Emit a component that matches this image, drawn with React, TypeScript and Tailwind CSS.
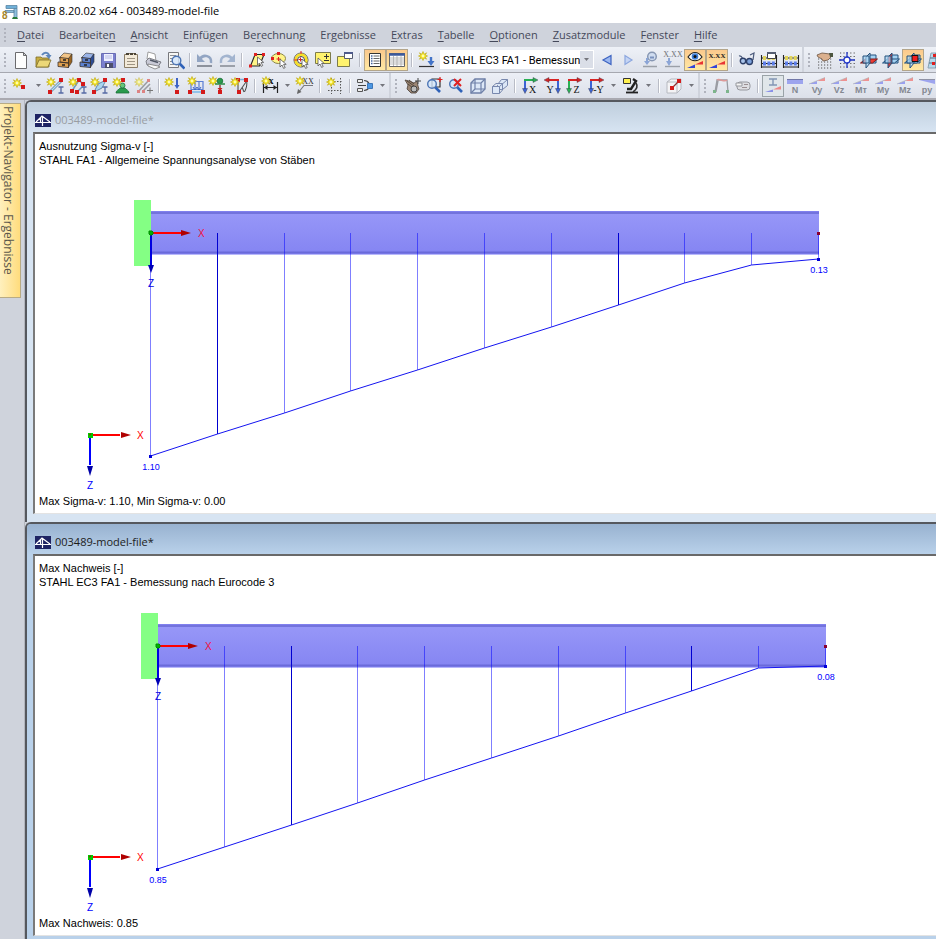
import type { ReactNode } from 'react';

type Menu = { before: string; hotkey: string; after: string };

type Station = { y: number; solid?: boolean };

type ModelView = {
    id: string;
    active: boolean;
    title: string;
    heading: string[];
    footer: string;
    originX: number;
    axisY: number;
    stations: Station[];
    startValue: string;
    endValue: string;
}

const menus: Menu[] = [
    { before: '', hotkey: 'D', after: 'atei' },
    { before: 'Bearbeite', hotkey: 'n', after: '' },
    { before: '', hotkey: 'A', after: 'nsicht' },
    { before: 'E', hotkey: 'i', after: 'nfügen' },
    { before: 'Be', hotkey: 'r', after: 'echnung' },
    { before: 'Er', hotkey: 'g', after: 'ebnisse' },
    { before: '', hotkey: 'E', after: 'xtras' },
    { before: '', hotkey: 'T', after: 'abelle' },
    { before: '', hotkey: 'O', after: 'ptionen' },
    { before: '', hotkey: 'Z', after: 'usatzmodule' },
    { before: '', hotkey: 'F', after: 'enster' },
    { before: '', hotkey: 'H', after: 'ilfe' },
];

const views: ModelView[] = [
    {
        id: 'sigma',
        active: false,
        title: '003489-model-file*',
        heading: ['Ausnutzung Sigma-v [-]', 'STAHL FA1 - Allgemeine Spannungsanalyse von Stäben'],
        footer: 'Max Sigma-v: 1.10, Min Sigma-v: 0.00',
        originX: 116,
        axisY: 66,
        stations: [
            { y: 289 }, { y: 267, solid: true }, { y: 246 }, { y: 224 }, { y: 203 }, { y: 181 },
            { y: 160 }, { y: 138, solid: true }, { y: 116 }, { y: 98 }, { y: 92 },
        ],
        startValue: '1.10',
        endValue: '0.13',
    },
    {
        id: 'eurocode',
        active: true,
        title: '003489-model-file*',
        heading: ['Max Nachweis [-]', 'STAHL EC3 FA1 - Bemessung nach Eurocode 3'],
        footer: 'Max Nachweis: 0.85',
        originX: 123,
        axisY: 57,
        stations: [
            { y: 280 }, { y: 258 }, { y: 236, solid: true }, { y: 214 }, { y: 191 }, { y: 169 },
            { y: 147 }, { y: 124 }, { y: 102, solid: true }, { y: 79 }, { y: 77 },
        ],
        startValue: '0.85',
        endValue: '0.08',
    },
];

const MEMBER_LENGTH = 668;

/* ---------- small drawing helpers shared by the toolbar icons ---------- */

function Icon({ children }: { children: ReactNode }) {
    return (
        <svg width="20" height="20" viewBox="0 0 20 20" fill="none" aria-hidden="true">
            {children}
        </svg>
    )
}

function Star({ x, y }: { x: number; y: number }) {
    return (
        <g transform={`translate(${x} ${y})`}>
            <path d="M0-4.5L1.2-1.8 3.6-3.2 2.2-1 4.500 0 2.2 1 3.6 3.2 1.200 2 0 4.500-1.200 2-3.600 3.200-2.200 1-4.500 0-2.200-1-3.600-3.200-1.200-1.800z" fill="#f6e71c" stroke="#c2ae22" strokeWidth=".7" />
            <circle r="1.4" fill="#fffcae" />
        </g>
    )
}

function Dot({ x, y }: { x: number; y: number }) {
    return <rect x={x - 2} y={y - 2} width="4" height="4" fill="#d41a1a" />
}

function Profile({ x, y }: { x: number; y: number }) {
    return <path d={`M${x - 2.5} ${y - 3}h5M${x} ${y - 3}v6M${x - 2.5} ${y + 3}h5`} stroke="#566aa4" strokeWidth="1.3" />
}

function Cursor({ x, y }: { x: number; y: number }) {
    return <path d={`M${x} ${y}v8l2-2 1.6 3.4 1.6-.8-1.6-3.2h2.6z`} fill="#fff" stroke="#555" strokeWidth=".8" />
}

function Cabinet({ front, side, top }: { front: string; side: string; top: string }) {
    return (
        <Icon>
            <path d="M4 8L9 3l8 1-3 5z" fill={top} stroke="#333" strokeWidth=".6" />
            <path d="M13 9l4-5v8l-4 6z" fill={side} stroke="#333" strokeWidth=".6" />
            <path d="M5 7.500l8.500 1V13L5 12zM3 12l10.500 1v4.500L3 16.500z" fill={front} stroke="#3a3028" strokeWidth=".8" />
            <path d="M8 10h3M7 15h3" stroke="#222" strokeWidth="1.400" />
        </Icon>
    )
}

function Lens({ x, y }: { x: number; y: number }) {
    return (
        <>
            <path d={`M${x + 3} ${y + 3}l5 5`} stroke="#2f62b8" strokeWidth="2.6" />
            <circle cx={x} cy={y} r="4.3" fill="#d3e6fb" fillOpacity=".8" stroke="#4b74b4" strokeWidth="1.4" />
        </>
    )
}

function Slope() {
    return (
        <>
            <path d="M2 18L10 14.500V18z" fill="#3345d8" />
            <path d="M10 14.500L18 11v3.500z" fill="#e83434" />
        </>
    )
}

function Abacus() {
    return (
        <>
            <path d="M2.500 5v13M17.500 5v13M2 8h16M2 13.500h16M2 17h16" stroke="#222" strokeWidth="1.100" />
            <path d="M4 8h12" stroke="#e0d35a" strokeWidth="4" strokeDasharray="3 1.400" />
            <path d="M4 13.500h12" stroke="#5b7ce8" strokeWidth="4" strokeDasharray="3 1.400" />
        </>
    )
}

function Planes({ active = 0 }: { active?: number }) {
    const blue = '#a4d2f2';
    return (
        <Icon>
            <path d="M10 5h7v8h-7z" fill={blue} stroke="#23507c" />
            <path d="M1.500 13l5-4h12l-5 4z" fill={active === 0 ? '#ee3a32' : blue} stroke={active === 0 ? '#7c1c1c' : '#23507c'} />
            <path d="M7 7l4-4v10l-4 5z" fill={active === 1 ? '#ee3a32' : '#c4e2f7'} stroke="#23507c" />
            <path d="M4 6h6v7H4z" fill={blue} fillOpacity=".7" stroke="#23507c" />
            {active === 2 && <path d="M9 5.500h6v6H9z" fill="#f02020" stroke="#111" />}
        </Icon>
    )
}

function AxisView({ label, across, down, flip }: { label: string; across: string; down: string; flip?: boolean }) {
    const stem = flip ? 16 : 5;
    return (
        <Icon>
            <path d={`M${stem} 5v8`} stroke={down} strokeWidth="2" />
            <path d={`M${stem - 2.5} 12.500h5l-2.500 5z`} fill={down} stroke="#334" strokeWidth=".4" />
            <path d={flip ? 'M6 4h11' : 'M4 4h10'} stroke={across} strokeWidth="2" />
            <path d={flip ? 'M7 1.500L2 4l5 2.500z' : 'M13 1.500L18 4l-5 2.500z'} fill={across} stroke="#334" strokeWidth=".4" />
            <text x={flip ? 8 : 12.5} y="17" textAnchor="middle" fontSize="10" className="font-['Liberation_Serif',serif]" fill="#111">{label}</text>
        </Icon>
    )
}

function ResultIcon({ label, flat }: { label: string; flat?: boolean }) {
    return (
        <Icon>
            {flat ? (
                <>
                    <path d="M2 3h16v5H2z" fill="#9da4ee" />
                    <path d="M2 3.500h16" stroke="#7177a8" />
                </>
            ) : (
                <>
                    <path d="M2 8l8-3v3z" fill="#989ff0" />
                    <path d="M10 5l8-3.500V5z" fill="#ee9292" />
                    <path d="M2 8L18 1.500" stroke="#aaa" strokeWidth=".6" />
                </>
            )}
            <text x="10" y="17" textAnchor="middle" fontSize="9" fontWeight="bold" className="font-['Liberation_Sans',sans-serif]" fill="#858992">{label}</text>
        </Icon>
    )
}

/* ---------- toolbar building blocks ---------- */

function Tool({ name, pressed, children }: { name: string; pressed?: 'hot' | 'soft'; children: ReactNode }) {
    const look = pressed === 'hot'
        ? 'border border-[#b3a58a] bg-linear-to-b from-[#fbc98c] to-[#ffe9a4]'
        : pressed === 'soft'
            ? 'border border-[#9aa3a8] bg-[#e0e6ea]'
            : '';
    return (
        <button type="button" aria-label={name} aria-pressed={pressed ? true : undefined} className={`flex h-[22px] w-[22px] shrink-0 items-center justify-center ${look}`}>
            {children}
        </button>
    )
}

function Separator() {
    return (
        <div className="flex w-2 shrink-0 justify-center">
            <div className="h-[14px] w-px bg-[#b9bcc6]" />
            <div className="h-[14px] w-px bg-white" />
        </div>
    )
}

function Grip() {
    return (
        <div className="flex w-[10px] shrink-0 flex-col items-center gap-[2px]">
            {[0, 1, 2, 3].map((i) => <div key={i} className="h-[2px] w-[2px] bg-[#b0b3bd]" />)}
        </div>
    )
}

function BarBreak() {
    return (
        <div className="flex w-3 shrink-0 items-center self-stretch">
            <div className="w-[2px] self-stretch bg-[#cfd3dc]" />
            <Grip />
        </div>
    )
}

function Caret({ name }: { name: string }) {
    return (
        <button type="button" aria-label={name} className="flex w-[13px] shrink-0 items-center justify-center">
            <svg width="5" height="3" viewBox="0 0 5 3" aria-hidden="true"><path d="M0 0h5L2.5 3z" fill="#74757c" /></svg>
        </button>
    )
}

function MainToolbar() {
    return (
        <div role="toolbar" aria-label="Standard" className="flex h-[26px] items-center border-b border-[#a6a8b0] bg-linear-to-b from-[#eef1f7] to-[#dde1ea]">
            <Grip />
            <Tool name="Neu"><Icon>
                <path d="M4.5 2.5h8l3 3v13h-11z" fill="#fdfdfd" stroke="#6b6b6e" />
                <path d="M12.5 2.5v3h3z" fill="#d4d4d8" stroke="#6b6b6e" />
            </Icon></Tool>
            <Tool name="Öffnen"><Icon>
                <path d="M3 7h5l1 1h7v9H3z" fill="#c7ad42" stroke="#7d6d2a" strokeWidth=".8" />
                <path d="M3 17L6 10h12l-3 7z" fill="#ecd878" stroke="#7d6d2a" strokeWidth=".8" />
                <path d="M9 5c3-4 7-2 7 1" stroke="#5d86bb" strokeWidth="2" />
                <path d="M12.5 5h6L16 9z" fill="#5d86bb" />
            </Icon></Tool>
            <Tool name="Projekt-Manager"><Cabinet front="#e0a04e" side="#9a6420" top="#f1c487" /></Tool>
            <Tool name="Block-Manager"><Cabinet front="#5c81cf" side="#2d4c94" top="#9ab4e8" /></Tool>
            <Tool name="Speichern"><Icon>
                <path d="M2.5 3.5h14v14h-14z" fill="#7b80cf" stroke="#6a6db4" />
                <path d="M5 4h9v7H5z" fill="#eef0ff" />
                <path d="M6 6h7M6 8h7" stroke="#b8bce4" />
                <path d="M6 13h8v5H6z" fill="#4d4f6c" />
                <path d="M8 14h2v3H8z" fill="#fff" />
            </Icon></Tool>
            <Tool name="Eigenschaften"><Icon>
                <path d="M3.5 4.5h3v-1h7v1h3v13h-13z" fill="#f3ead9" stroke="#8b7d66" />
                <path d="M5 4h3M9 4h3M13 4h2" stroke="#4a4335" strokeWidth="2" />
                <path d="M6 8.5h8M6 11.5h8M6 14.500h8" stroke="#9e9483" />
            </Icon></Tool>
            <Tool name="Drucken"><Icon>
                <path d="M4 9l1-7 7 2 1 7z" fill="#fff" stroke="#888" strokeWidth=".8" />
                <path d="M3 11l3-3 12 4-3 5-11-2z" fill="#c9cad6" stroke="#66676f" strokeWidth=".8" />
                <path d="M5 14l10 2 2 1-5 2-7-3z" fill="#fafafa" stroke="#777" strokeWidth=".8" />
                <path d="M7 10l8 2.500" stroke="#4f5664" strokeWidth="1.500" />
            </Icon></Tool>
            <Tool name="Druckvorschau"><Icon>
                <path d="M3.5 2.5h10v15h-10z" fill="#f6f6f4" stroke="#77787d" />
                <path d="M5 5.500h6M5 8.500h3M5 11.500h2M5 14.500h4" stroke="#8d8f94" />
                <Lens x={11.5} y={10.5} />
            </Icon></Tool>
            <Separator />
            <Tool name="Rückgängig"><Icon>
                <path d="M5 9c3-5 12-4 11 4" stroke="#92a5c3" strokeWidth="2.500" />
                <path d="M2 4v8h8z" fill="#92a5c3" />
                <path d="M2 16h15" stroke="#8d929c" strokeWidth="2" />
            </Icon></Tool>
            <Tool name="Wiederholen"><Icon>
                <path d="M15 9c-3-5-12-4-11 4" stroke="#a2b4cf" strokeWidth="2.500" />
                <path d="M18 4v8h-8z" fill="#a2b4cf" />
                <path d="M3 16h15" stroke="#9ba0a9" strokeWidth="2" />
            </Icon></Tool>
            <Separator />
            <Tool name="Rhomboid-Auswahl"><Icon>
                <path d="M3.500 16L8 4.500h9L12.500 16z" fill="#fff487" stroke="#222" strokeWidth="1.100" />
                <Cursor x={10.5} y={7} />
                <path d="M2 14.500h3v3H2zM7 3h3v3H7zM15 3h3v3h-3z" fill="#e02020" />
            </Icon></Tool>
            <Tool name="Ellipsen-Auswahl"><Icon>
                <ellipse cx="9.500" cy="8.500" rx="7" ry="5" fill="#fff487" stroke="#8a8448" />
                <path d="M9.500 7v4M7.500 9h4" stroke="#e02020" />
                <Cursor x={11} y={9} />
                <path d="M8 2h3v3H8zM2 7h3v3H2z" fill="#e02020" />
            </Icon></Tool>
            <Tool name="Ring-Auswahl"><Icon>
                <circle cx="10" cy="10" r="7" fill="#fff" stroke="#555" />
                <circle cx="10" cy="10" r="5.300" stroke="#f5df28" strokeWidth="2.800" />
                <circle cx="10" cy="10" r="3.500" stroke="#444" />
                <path d="M9.500 7.500v4M7.500 9.500h4M10 1v3M3 10h3" stroke="#e02020" />
                <Cursor x={11} y={9} />
            </Icon></Tool>
            <Tool name="Fenster-Auswahl"><Icon>
                <path d="M2.5 2.5h15v11h-15z" fill="#fff36e" stroke="#7c7b4c" />
                <path d="M11 6.500h5M13.500 4v5M11 10.500h5" stroke="#333" />
                <Cursor x={5} y={8} />
            </Icon></Tool>
            <Tool name="Objekte übernehmen"><Icon>
                <path d="M2.5 6.5h12v10h-12z" fill="#fff36e" stroke="#7c7b4c" />
                <path d="M9.5 2.5h8v6h-8z" fill="#fff" stroke="#555b70" />
                <path d="M9 3h9" stroke="#4d5a8c" strokeWidth="2" />
            </Icon></Tool>
            <Separator />
            <Tool name="Navigator" pressed="hot"><Icon>
                <path d="M4.5 3.500h11v13h-11z" fill="#fff" stroke="#333" />
                <path d="M6 6h1.500M6 8.500h1.500M6 11h1.500M6 13.500h1.500" stroke="#44639d" strokeWidth="1.300" />
                <path d="M8.500 6h6M8.500 8.500h6M8.500 11h6M8.500 13.500h6" stroke="#666" />
            </Icon></Tool>
            <Tool name="Tabellen" pressed="hot"><Icon>
                <path d="M2.5 3.500h15v13h-15z" fill="#fff" stroke="#666" />
                <path d="M2 4.500h16" stroke="#3d5a9c" strokeWidth="2.500" />
                <path d="M3 8h14M3 10h14M3 12h14M3 14h14M6.500 6v10M10 6v10M14 6v10" stroke="#aaa" strokeWidth=".8" />
            </Icon></Tool>
            <Separator />
            <Tool name="Lastfall"><Icon>
                <Star x={6} y={6} />
                <path d="M2 16.500h15" stroke="#333" strokeWidth="1.200" />
                <path d="M14 7v6" stroke="#4374c8" strokeWidth="2.400" />
                <path d="M10.500 11h7L14 16z" fill="#4374c8" />
            </Icon></Tool>
            <div className="flex w-[158px] shrink-0 justify-center">
                <div className="flex h-[19px] w-[154px] items-center border border-white bg-white">
                    <select aria-label="Lastfall" className="h-full min-w-0 flex-1 appearance-none bg-white pt-[2px] pl-[2px] font-['Roboto',sans-serif] text-[11px] text-black outline-none">
                        <option>STAHL EC3 FA1 - Bemessun</option>
                    </select>
                    <div className="flex h-full w-[13px] items-center justify-center bg-[#dadee7]">
                        <svg width="5" height="3" viewBox="0 0 5 3" aria-hidden="true"><path d="M0 0h5L2.5 3z" fill="#74757c" /></svg>
                    </div>
                </div>
            </div>
            <Tool name="Vorheriger"><Icon><path d="M14 5.500v9L6 10z" fill="#9cb8f0" stroke="#3c62c0" strokeWidth="1.200" /></Icon></Tool>
            <Tool name="Nächster"><Icon><path d="M6 5.500v9l7-4.500z" fill="#c4d4f4" stroke="#8ba6de" strokeWidth="1.200" /></Icon></Tool>
            <Tool name="Ergebnisse prüfen"><Icon>
                <circle cx="11" cy="6.500" r="4.300" fill="#cfdcf0" stroke="#8797b3" strokeWidth="1.500" />
                <path d="M9 6.500h4v2H9z" fill="#7990bd" />
                <path d="M6 8v5" stroke="#8ba5d6" strokeWidth="2" /><path d="M3 11h6l-3 4z" fill="#8ba5d6" />
                <path d="M2 16.500h14" stroke="#9ba0a8" strokeWidth="1.500" />
            </Icon></Tool>
            <Tool name="Belastungswerte"><Icon>
                <text x="10" y="7" textAnchor="middle" fontSize="8" className="font-['Liberation_Serif',serif]" fill="#707276">X.XX</text>
                <path d="M6 8v5" stroke="#8ba5d6" strokeWidth="2" /><path d="M3 11h6l-3 5z" fill="#8ba5d6" />
                <path d="M2 16.500h15" stroke="#9ba0a8" strokeWidth="1.400" />
            </Icon></Tool>
            <Tool name="Ergebnisse anzeigen" pressed="hot"><Icon>
                <path d="M3 7c4-6 10-6 14 0-4 5-10 5-14 0z" fill="#fff" stroke="#222" strokeWidth="1.200" />
                <circle cx="10" cy="6.500" r="3.300" fill="#3f7fd8" /><circle cx="10" cy="6.500" r="1.500" fill="#111" />
                <Slope />
            </Icon></Tool>
            <Tool name="Werte anzeigen" pressed="hot"><Icon>
                <text x="10" y="8" textAnchor="middle" fontSize="7" fontWeight="bold" className="font-['Liberation_Serif',serif]" fill="#222">X.XX</text>
                <Slope />
            </Icon></Tool>
            <Separator />
            <Tool name="Ausgabeparameter"><Icon>
                <path d="M2 6c3-1 3 2 5 5M13 5l4-2-1 7" stroke="#4a597a" strokeWidth="1.200" />
                <circle cx="6" cy="11" r="2.700" fill="#a9c4ea" stroke="#2d3f68" strokeWidth="1.400" />
                <circle cx="12.500" cy="11.500" r="3" fill="#7da2dc" stroke="#2d3f68" strokeWidth="1.400" />
            </Icon></Tool>
            <Tool name="Berechnung"><Icon>
                <Abacus />
                <path d="M8.5 2.500h8v6h-8z" fill="#fff" stroke="#444" /><path d="M8 3h9" stroke="#555e72" strokeWidth="2" />
            </Icon></Tool>
            <Tool name="Alles berechnen"><Icon><Abacus /></Icon></Tool>
            <BarBreak />
            <Tool name="Raster"><Icon>
                <path d="M3 9h15M3 12h15M3 15h15M3 18h15" stroke="#555" strokeWidth="1.100" strokeDasharray="1.200 1.800" />
                <path d="M2 5l5-2 8 1 1 3-3 3-5 1-1-2-4-2z" fill="#dbb08e" stroke="#6b5240" strokeWidth=".8" />
                <path d="M14 3h4v4h-3z" fill="#4c5640" />
            </Icon></Tool>
            <Tool name="Fang"><Icon>
                <path d="M3 3h15M3 6.500h15M3 10h15M3 13.500h15M3 17h15" stroke="#555" strokeWidth="1.200" strokeDasharray="1.200 2.200" />
                <circle cx="10" cy="10" r="3" stroke="#2338c8" strokeWidth="1.300" fill="#fff" />
                <path d="M10 2v5M10 13v5M2 10h5M13 10h5" stroke="#2338c8" strokeWidth="1.300" />
            </Icon></Tool>
            <Tool name="Ebene XY"><Planes /></Tool>
            <Tool name="Ebene YZ"><Planes active={1} /></Tool>
            <Tool name="Ebene XZ" pressed="hot"><Planes active={2} /></Tool>
            <Tool name="Nullpunkt"><Icon>
                <path d="M3 18L6 3h12v15z" fill="#b5d9ec" stroke="#8ba2b2" />
                <path d="M4 13h14M5 8h13M11 3v15" stroke="#537188" />
                <path d="M8 4h3v3H8zM7 12h3v3H7z" fill="#e02020" />
            </Icon></Tool>
        </div>
    )
}

function ModelToolbar() {
    return (
        <div role="toolbar" aria-label="Modell" className="flex h-[27px] items-center border-b-2 border-[#a9a9b0] bg-linear-to-b from-[#eceff6] to-[#dce0e9]">
            <Grip />
            <Tool name="Knoten"><Icon><Star x={6} y={7} /><Dot x={12} y={11} /></Icon></Tool>
            <Caret name="Knoten-Optionen" />
            <Tool name="Stab"><Icon>
                <path d="M4 16L16 4" stroke="#5b7f9e" strokeWidth="2.600" /><path d="M4 16L16 4" stroke="#b5dcf4" strokeWidth="1.400" />
                <Dot x={4} y={16} /><Dot x={15} y={4} /><Star x={5} y={6} /><Profile x={15} y={14} />
            </Icon></Tool>
            <Tool name="Stabzug"><Icon>
                <path d="M4 15l7-11 5 5-7 7" stroke="#6d9cc0" strokeWidth="1.500" />
                <Dot x={4} y={15} /><Dot x={11} y={4} /><Dot x={15} y={8} /><Dot x={9} y={16} /><Star x={5} y={6} /><Profile x={16} y={14} />
            </Icon></Tool>
            <Tool name="Stabsatz"><Icon>
                <path d="M4 16L8 8l8-4-4 8z" fill="#a9d4f0" stroke="#5b7f9e" strokeWidth=".9" />
                <Dot x={4} y={16} /><Dot x={15} y={4} /><Star x={5} y={6} /><Profile x={15} y={14} />
            </Icon></Tool>
            <Tool name="Knotenlager"><Icon>
                <path d="M4 17c0-3 3-3 4-5h5c1 2 4 2 4 5z" fill="#2a9a4c" stroke="#1c6f38" strokeWidth=".8" /><circle cx="10.500" cy="9.500" r="2.500" fill="#63c67d" stroke="#1c6f38" strokeWidth=".8" />
                <Dot x={11} y={4} /><Star x={5} y={6} />
            </Icon></Tool>
            <Tool name="Stabteilung"><Icon>
                <path d="M4 16L15 4M9 15l7-7" stroke="#9a9da4" strokeWidth="1.600" />
                <path d="M3 14h3v3H3zM13 3h3v3h-3zM8 14h3v3H8z" fill="#dd8383" />
                <path d="M13 14.500h6M16 11.500v6" stroke="#777" /><g opacity=".6"><Star x={5} y={6} /></g>
            </Icon></Tool>
            <Separator />
            <Tool name="Knotenlast"><Icon>
                <Star x={5} y={6} /><path d="M13 2v8" stroke="#3d63c4" strokeWidth="2" /><path d="M10.500 9h5L13 13z" fill="#3d63c4" /><Dot x={13} y={16} />
            </Icon></Tool>
            <Tool name="Stablast"><Icon>
                <path d="M5 5.500h12v8H5zM9 5v9M13 5v9" stroke="#5b7fd4" strokeWidth="1.200" />
                <path d="M7 11l2 3 2-3M11 11l2 3 2-3" stroke="#3d63c4" />
                <path d="M3 16h15" stroke="#92c2ea" strokeWidth="2" /><Dot x={4} y={16} /><Dot x={17} y={16} /><Star x={6} y={5} />
            </Icon></Tool>
            <Tool name="Zwangsverschiebung"><Icon>
                <Star x={5} y={5} /><circle cx="12" cy="5" r="2.800" fill="#2a9a4c" stroke="#1c6f38" strokeWidth=".8" />
                <path d="M7 8h10" stroke="#2c8c48" strokeWidth="1.500" /><path d="M12 9v4" stroke="#8d2222" strokeWidth="1.300" /><path d="M9.500 12h5L12 15z" fill="#c42222" /><Dot x={12} y={16} />
            </Icon></Tool>
            <Tool name="Imperfektion"><Icon>
                <path d="M8 5v10M9 16l7-10M12 11l2 5" stroke="#555" strokeWidth="1.100" />
                <path d="M16.500 4c1 4 0 8-2 12" stroke="#444" />
                <path d="M7 3.500h9" stroke="#7eaed8" strokeWidth="1.500" />
                <Dot x={8} y={4} /><Dot x={16} y={4} /><Dot x={9} y={16} /><Star x={5} y={6} />
            </Icon></Tool>
            <Separator />
            <Tool name="Bemaßung"><Icon>
                <path d="M3.500 6v11M17.500 6v11M4 11.500h13" stroke="#222" strokeWidth="1.200" />
                <path d="M4 11.500l3.500-2.500v5zM17 11.500l-3.500-2.500v5z" fill="#222" />
                <text x="11" y="8" textAnchor="middle" fontSize="10" fontWeight="bold" className="font-['Liberation_Serif',serif]" fill="#111">x</text><Star x={6} y={5} />
            </Icon></Tool>
            <Caret name="Bemaßungs-Optionen" />
            <Tool name="Kommentar"><Icon>
                <path d="M3 17L9 9.500h9" stroke="#77797f" strokeWidth="1.200" /><path d="M2 18l1-5 3.500 3z" fill="#666" />
                <text x="13" y="8" textAnchor="middle" fontSize="8" className="font-['Liberation_Serif',serif]" fill="#333">XX</text><Star x={5} y={5} />
            </Icon></Tool>
            <Separator />
            <Tool name="Hilfslinien"><Icon>
                <path d="M3 5.500h15M3 14.500h15M6.500 2v16M15.500 2v16" stroke="#555" strokeDasharray="1.500 1.500" /><Star x={6} y={6} />
            </Icon></Tool>
            <Separator />
            <Tool name="Modell generieren"><Icon>
                <path d="M2.5 3.500h5v3h-5zM2.5 12.500h5v3h-5z" fill="#eee" stroke="#555" />
                <path d="M9 4.500c3 0 4 1 5 3M9 14.500c3 0 4-1 5-3M3 9.500h8" stroke="#444" strokeWidth="1.200" /><path d="M12.500 7.500h5v5h-5z" fill="#4b96e2" stroke="#3c76b8" />
            </Icon></Tool>
            <Caret name="Generieren-Optionen" />
            <BarBreak />
            <Tool name="Verschieben"><Icon>
                <path d="M3 4l4 1 5 2 3-2 1 5 1 3-3 4H9l-4-4 1-4z" fill="#9c8674" stroke="#4b4038" strokeWidth=".8" /><path d="M5 5l7 5M6 8l5 4M7 4l5 4" stroke="#54463a" />
                <circle cx="12" cy="13" r="3" fill="#bbb" stroke="#444" /><path d="M16 2v6M13 5h6" stroke="#444" />
            </Icon></Tool>
            <Tool name="Zoom Fenster"><Icon>
                <path d="M8 3h8v8H8z" stroke="#333" strokeWidth="1.200" /><Lens x={8} y={8} /><path d="M16 1v5M13.500 3.500h5" stroke="#e02020" strokeWidth="1.200" />
            </Icon></Tool>
            <Tool name="Zoom zurück"><Icon><Lens x={8} y={8} /><path d="M8 3l7 7M15 3l-7 7" stroke="#e02020" strokeWidth="2" /></Icon></Tool>
            <Tool name="Isometrie"><Icon>
                <path d="M3 7l4-4h10v10l-4 4H3z" fill="#dce7f7" stroke="#6f80a8" strokeWidth="1.400" /><path d="M3 7h10v10M13 7l4-4M7 3v10h10M3 17l4-4" stroke="#6f80a8" strokeWidth="1.200" />
            </Icon></Tool>
            <Tool name="Drahtmodell"><Icon>
                <path d="M7.500 8.500l4-5h6v6l-5 4h-5z" fill="#dce7f7" stroke="#7888ae" /><path d="M2.500 10.500h7v7h-7zM6 7.500h6.500V14" fill="#dce7f7" stroke="#7888ae" /><path d="M9.500 10.500l8-7M9.500 17.500l3-3.500M2.500 10.500L6 7.500" stroke="#7888ae" />
            </Icon></Tool>
            <Separator />
            <Tool name="Ansicht in X"><AxisView label="X" across="#29b053" down="#3c63d4" /></Tool>
            <Tool name="Ansicht in Y"><AxisView label="Y" across="#d82424" down="#3c63d4" flip /></Tool>
            <Tool name="Ansicht in Z"><AxisView label="Z" across="#d82424" down="#29b053" /></Tool>
            <Tool name="Ansicht gegen Y"><AxisView label="-Y" across="#d82424" down="#3c63d4" /></Tool>
            <Caret name="Ansicht-Optionen" />
            <Tool name="Sichtbarkeiten"><Icon>
                <path d="M12 3l3 2-5 8H6" stroke="#222" strokeWidth="2.400" /><path d="M15 7c2 3 1 6-3 9" stroke="#333" strokeWidth="1.600" /><path d="M5 16.500h12" stroke="#222" strokeWidth="1.800" /><path d="M2.5 2.500h7v5h-7z" fill="#fff150" stroke="#333" />
            </Icon></Tool>
            <Caret name="Sichtbarkeits-Optionen" />
            <Separator />
            <Tool name="Ausschnitt"><Icon>
                <path d="M3 6l4-3h10v10l-4 4H3z" fill="#f3f3f5" stroke="#b6b9c0" /><path d="M3 6h10v11M13 6l4-3" stroke="#b6b9c0" /><path d="M8 12l7-7" stroke="#833" strokeWidth="1.300" /><Dot x={8} y={12} /><Dot x={15} y={5} />
            </Icon></Tool>
            <Caret name="Ausschnitt-Optionen" />
            <BarBreak />
            <Tool name="Verformungen"><Icon>
                <path d="M4 16L6 4h10l1 12M7 5L5 16" stroke="#9a9ca3" strokeWidth="1.300" /><path d="M6 4c3-2 7 3 10 0" stroke="#d99" strokeWidth="1.500" /><path d="M2 14h3v3H2zM15 14h3v3h-3z" fill="#7db58c" />
            </Icon></Tool>
            <Tool name="Querschnitt"><Icon>
                <rect x="4" y="6" width="13" height="8" rx="3" fill="#dedee2" stroke="#96989e" /><path d="M3 7h6v3H3z" fill="#f4f4f4" stroke="#96989e" /><path d="M11 8.500h4M9 11.500h5" stroke="#9a8f91" strokeWidth="1.200" />
            </Icon></Tool>
            <Separator />
            <Tool name="Stabergebnisse" pressed="soft"><Icon>
                <path d="M6 3h8M10 3v6M6 9h8" stroke="#8195b4" strokeWidth="1.400" /><path d="M2 16l8-2.500V16z" fill="#8990e8" /><path d="M10 13.500l8-3.500v3.500z" fill="#e88" />
            </Icon></Tool>
            <Tool name="N"><ResultIcon label="N" flat /></Tool>
            <Tool name="Vy"><ResultIcon label="Vy" /></Tool>
            <Tool name="Vz"><ResultIcon label="Vz" /></Tool>
            <Tool name="MT"><ResultIcon label="Mᴛ" /></Tool>
            <Tool name="My"><ResultIcon label="My" /></Tool>
            <Tool name="Mz"><ResultIcon label="Mz" /></Tool>
            <Tool name="py"><Icon>
                <path d="M2 4h16v4z" fill="#9da4ee" /><path d="M2 3.500h16" stroke="#8f93a6" />
                <text x="10" y="17" textAnchor="middle" fontSize="9" fontWeight="bold" className="font-['Liberation_Sans',sans-serif]" fill="#858992">py</text>
            </Icon></Tool>
        </div>
    )
}

/* ---------- model windows ---------- */

function GlobalAxes() {
    return (
        <g>
            <path d="M55 268h30" stroke="#f00" strokeWidth="2" />
            <path d="M86 265v6l10-3z" fill="#b00000" />
            <path d="M55 268v30" stroke="#00f" strokeWidth="2" />
            <path d="M52 299h6l-3 10z" fill="#0000a8" />
            <path d="M53 266h5v5h-5z" fill="#00c800" />
            <path d="M54 268l2-1" stroke="#c00000" />
            <text x="102" y="272" fill="#f00">X</text>
            <text x="52" y="322" fill="#00f">Z</text>
        </g>
    )
}

function MemberDiagram({ view }: { view: ModelView }) {
    const { originX, axisY, stations } = view;
    const endX = originX + MEMBER_LENGTH;
    const beamTop = axisY - 22;
    const stationX = (i: number) => Math.round(originX + (MEMBER_LENGTH * i) / (stations.length - 1)) - 0.5;
    const outline = stations.map((s, i) => `${stationX(i)},${s.y}`).join(' ');
    const last = stations[stations.length - 1];

    return (
        <svg width="900" height="327" viewBox="0 0 900 327" className="block max-w-none shrink-0 font-['Liberation_Sans',Arial,sans-serif] text-[10px]" role="img" aria-label={view.heading[0]}>
            <defs>
                <linearGradient id={`beam-${view.id}`} x1="0" x2="0" y1="0" y2="1">
                    <stop offset="0" stopColor="#9898f8" />
                    <stop offset="1" stopColor="#8484f2" />
                </linearGradient>
            </defs>
            <rect x={originX - 17} y={axisY - 33} width="17" height="66" fill="#84ff84" />
            <rect x={originX} y={beamTop} width={MEMBER_LENGTH} height="44" fill={`url(#beam-${view.id})`} />
            <path d={`M${originX} ${beamTop + 0.5}H${endX}`} stroke="#8080ee" />
            <path d={`M${originX} ${beamTop + 2}H${endX}`} stroke="#7373dd" strokeWidth="2" />
            <path d={`M${originX} ${beamTop + 41.5}H${endX}`} stroke="#6a6ada" strokeWidth="2" />
            <path d={`M${originX} ${beamTop + 43.5}H${endX}`} stroke="#b8b8fa" />

            {stations.map((s, i) => (
                <path
                    key={i}
                    d={`M${stationX(i)} ${axisY}V${s.y}`}
                    stroke={s.solid ? '#0000d0' : '#0000ff'}
                    strokeOpacity={s.solid ? 1 : 0.5}
                />
            ))}
            <polyline points={outline} fill="none" stroke="#1414f0" />
            <rect x={originX - 2} y={stations[0].y - 1} width="3" height="3" fill="#0000d8" />
            <rect x={endX - 2} y={last.y - 1} width="3" height="3" fill="#0000d8" />
            <rect x={endX - 2} y={axisY - 1} width="3" height="3" fill="#8a0030" />

            <path d={`M${originX + 1} ${axisY}h30`} stroke="#f00" strokeWidth="2" />
            <path d={`M${originX + 30} ${axisY - 3}v6l10-3z`} fill="#b00000" />
            <path d={`M${originX} ${axisY}v32`} stroke="#0000e0" strokeWidth="2" />
            <path d={`M${originX - 3} ${axisY + 32}h6l-3 8z`} fill="#0000b4" />
            <path d={`M${originX - 2} ${axisY - 2}h3l1 1v2l-1 1h-2l-1-1z`} fill="#00b400" stroke="#008c00" />
            <text x={originX + 47} y={axisY + 4} fill="#f01040">X</text>
            <text x={originX - 3} y={axisY + 54} fill="#0000e0">Z</text>
            <text x={originX} y={stations[0].y + 14} textAnchor="middle" className="text-[9px]" fill="#00f">{view.startValue}</text>
            <text x={endX} y={last.y + 14} textAnchor="middle" className="text-[9px]" fill="#00f">{view.endValue}</text>
            <GlobalAxes />
        </svg>
    )
}

function ModelWindow({ view }: { view: ModelView }) {
    const frame = view.active ? 'bg-[#b9d1ea] text-[#1c1c1c]' : 'bg-[#d7e4f2] text-[#999da3]';
    const caption = view.active ? 'from-[#98b2d0] to-[#b9d1ea]' : 'from-[#bfcedd] to-[#d7e4f2]';
    return (
        <section aria-label={view.title} className={`overflow-hidden rounded-tl-md border-t-2 border-l-2 border-[#55585e] pb-2 ${frame}`}>
            <header className={`flex h-[30px] items-center gap-1 bg-linear-to-b pt-[6px] pl-2 ${caption}`}>
                <svg width="16" height="13" viewBox="0 0 16 13" aria-hidden="true">
                    <path d="M0 0h16v13H0z" fill="#1e2464" />
                    <path d="M0 8.500h16M7.500 2v10M5.500 3v6M1 8l6-6 8 6" fill="none" stroke="#fff" strokeWidth="1.200" />
                </svg>
                <h2 className="font-['Open_Sans',sans-serif] text-[11px]">{view.title}</h2>
            </header>
            <div className="ml-[6px] overflow-hidden border-t-2 border-b border-l-2 border-t-[#696969] border-b-[#e3e3e3] border-l-[#7a7a7a] bg-white pt-[5px] pb-[5px] font-['Liberation_Sans',Arial,sans-serif] text-[11px] leading-[14px] text-black">
                {view.heading.map((line) => <p key={line} className="pl-1 whitespace-nowrap">{line}</p>)}
                <MemberDiagram view={view} />
                <p className="pl-1 whitespace-nowrap">{view.footer}</p>
            </div>
        </section>
    )
}

export default function App() {
    return (
        <div className="flex min-h-screen w-full flex-col overflow-hidden bg-[#cfd3dc] font-['Open_Sans',sans-serif] text-[11px]">
            <header className="flex h-[23px] items-center gap-[5px] bg-white pl-[2px] text-black">
                <svg width="16" height="16" viewBox="0 0 16 16" aria-hidden="true">
                    <path d="M4 1.500h11v3H4z" fill="#6fb0d8" stroke="#5b87a4" strokeWidth=".8" />
                    <path d="M3 6.500h9v2H3zM12 4.500h3v9h-3z" fill="#8fc0de" stroke="#5b87a4" strokeWidth=".8" />
                    <path d="M10 15h6l-1-2h-4z" fill="#277b3c" />
                    <text x="0" y="15" fontSize="10" fontWeight="bold" className="font-['Liberation_Sans',sans-serif]" fill="#a8862a">8</text>
                </svg>
                <h1>RSTAB 8.20.02 x64 - 003489-model-file</h1>
            </header>

            <nav className="flex h-6 items-center text-[#45495a]">
                <Grip />
                <div className="flex gap-[15px] pl-[7px]">
                    {menus.map((m) => (
                        <button key={m.before + m.hotkey + m.after} type="button">
                            {m.before}<span className="underline underline-offset-2">{m.hotkey}</span>{m.after}
                        </button>
                    ))}
                </div>
            </nav>

            <MainToolbar />
            <ModelToolbar />

            <div className="flex flex-1">
                <aside className="w-[25px] shrink-0 border-r border-[#b3b6be] pt-[3px]">
                    <button type="button" className="flex h-[195px] w-[21px] items-center justify-start border border-l-0 border-[#b8ab85] bg-linear-to-r from-[#fff0bd] to-[#ffdc7c] pt-[2px] pr-1 text-[12px] leading-[16px] text-[#5c584d] [writing-mode:vertical-rl]">
                        Projekt-Navigator - Ergebnisse
                    </button>
                </aside>
                <main className="flex min-w-0 flex-1 flex-col">
                    {views.map((view) => <ModelWindow key={view.id} view={view} />)}
                </main>
            </div>
        </div>
    )
}
